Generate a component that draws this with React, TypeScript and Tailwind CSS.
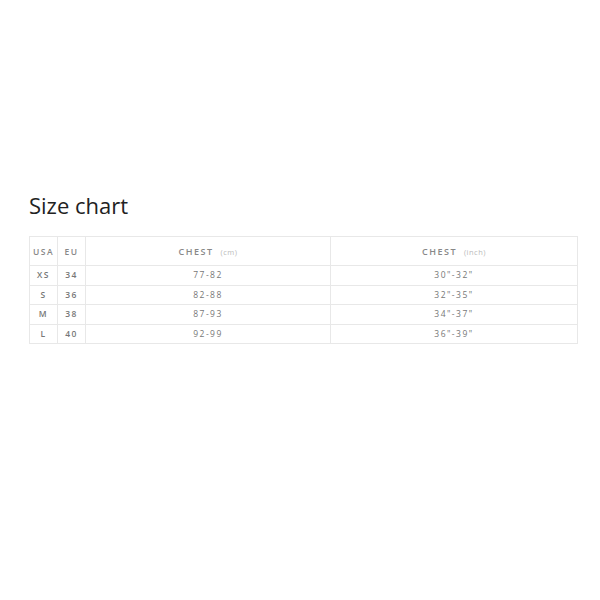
const rows = [
  { usa: "XS", eu: "34", cm: "77-82", inch: "30\"-32\"" },
  { usa: "S", eu: "36", cm: "82-88", inch: "32\"-35\"" },
  { usa: "M", eu: "38", cm: "87-93", inch: "34\"-37\"" },
  { usa: "L", eu: "40", cm: "92-99", inch: "36\"-39\"" },
]

export default function App() {
  return (
    <div className="w-[600px] h-[600px] bg-white font-['Open_Sans',sans-serif]">
      <div className="pt-[190px] pl-[29px]">
        <h2 className="text-[22px] leading-[30px] text-[#222] font-normal">Size chart</h2>
        <table className="mt-[16px] w-[548px] border-collapse table-fixed text-center text-[8.5px] tracking-[1.5px] text-[#777]">
          <colgroup>
            <col className="w-[28px]" />
            <col className="w-[28px]" />
            <col className="w-[245px]" />
            <col className="w-[247px]" />
          </colgroup>
          <thead>
            <tr className="h-[29px]">
              <th className="border border-[#e8e8e8] pt-[2px] font-semibold text-[#888]">USA</th>
              <th className="border border-[#e8e8e8] pt-[2px] font-semibold text-[#888]">EU</th>
              <th className="border border-[#e8e8e8] pt-[2px] text-[9px] font-semibold text-[#888]">
                CHEST <span className="ml-[3px] font-normal tracking-[0.5px] text-[7.5px] text-[#bbb]">(cm)</span>
              </th>
              <th className="border border-[#e8e8e8] pt-[2px] text-[9px] font-semibold text-[#888]">
                CHEST <span className="ml-[3px] font-normal tracking-[0.5px] text-[7.5px] text-[#bbb]">(inch)</span>
              </th>
            </tr>
          </thead>
          <tbody>
            {rows.map((r) => (
              <tr key={r.usa} className="h-[19.5px]">
                <td className="border border-[#e8e8e8] pt-[1px] font-semibold">{r.usa}</td>
                <td className="border border-[#e8e8e8] pt-[1px] font-semibold">{r.eu}</td>
                <td className="border border-[#e8e8e8] pt-[1px]">{r.cm}</td>
                <td className="border border-[#e8e8e8] pt-[1px]">{r.inch}</td>
              </tr>
            ))}
          </tbody>
        </table>
      </div>
    </div>
  )
}
